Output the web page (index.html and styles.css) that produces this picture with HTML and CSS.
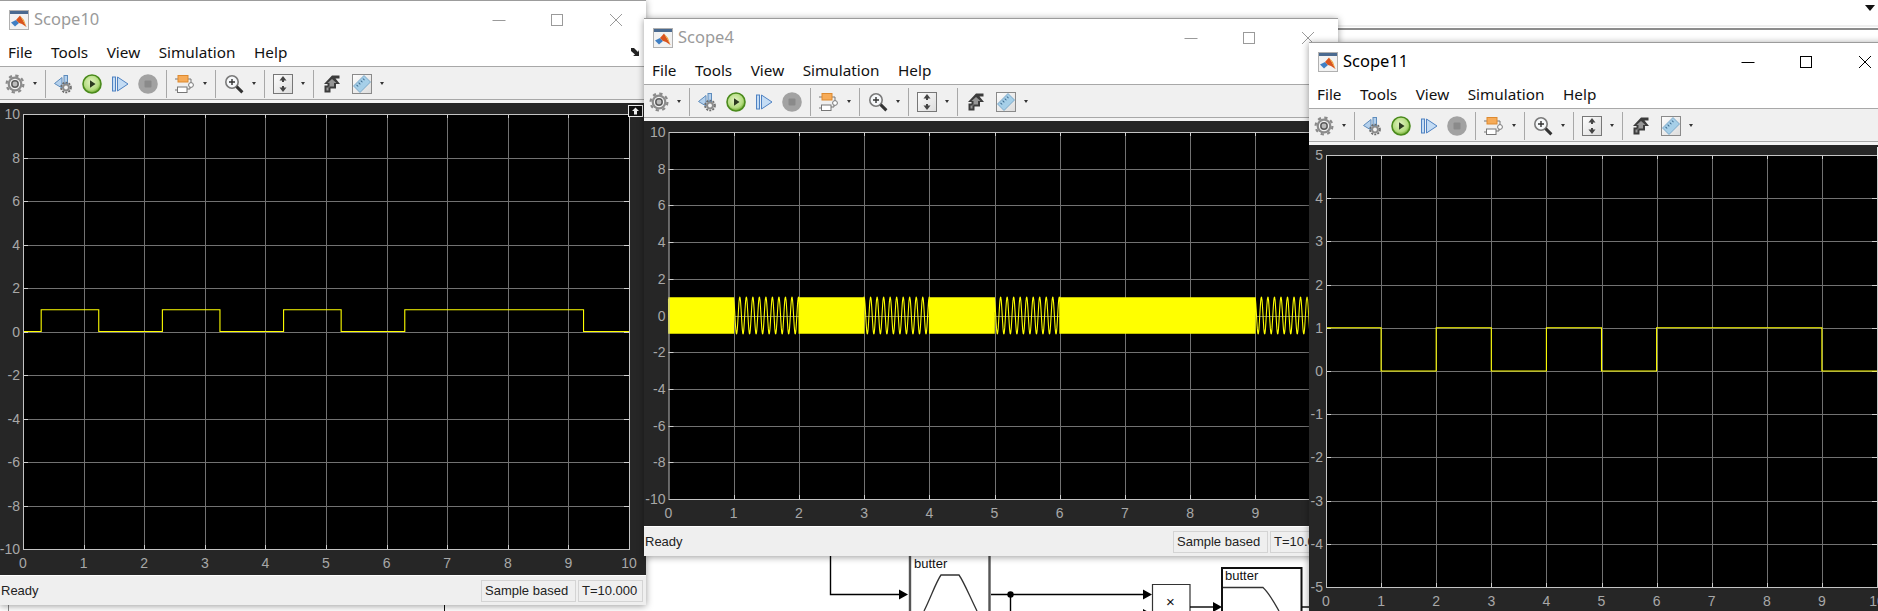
FILE: index.html
```html
<!DOCTYPE html>
<html lang="en">
<head>
    <meta charset="UTF-8">
    <title>Scopes</title>
    <link rel="stylesheet" href="styles.css">
</head>
<body>
    <!-- icons used by all three toolbars -->
    <svg class="sprite" xmlns="http://www.w3.org/2000/svg">
        <defs>
            <radialGradient id="playFill" cx="45%" cy="40%" r="60%">
                <stop offset="0%" stop-color="#e4f4c4"/>
                <stop offset="70%" stop-color="#b4dc80"/>
                <stop offset="100%" stop-color="#6ca82c"/>
            </radialGradient>
            <linearGradient id="boxFill" x1="0" y1="0" x2="1" y2="1">
                <stop offset="0%" stop-color="#fdfdfd"/>
                <stop offset="100%" stop-color="#dcdcdc"/>
            </linearGradient>
        </defs>
        <symbol id="i-logo" viewBox="0 0 20 20">
            <rect x="0.5" y="0.5" width="19" height="19" fill="#f2f2f2" stroke="#b0b0b0"/>
            <rect x="1" y="1" width="18" height="3" fill="#4a6a90"/>
            <polygon points="2,12.5 7,10 10,13 6,16.5" fill="#3f7fc4"/>
            <polygon points="7,10 11,5.5 14,10.5 17.5,17 13,14 10,13" fill="#d9541e"/>
            <polygon points="11,5.5 14,10.5 17.5,17 15,10" fill="#f0a030"/>
        </symbol>
        <symbol id="i-min" viewBox="0 0 14 14"><line x1="0.5" y1="7.5" x2="13.5" y2="7.5" stroke="currentColor"/></symbol>
        <symbol id="i-max" viewBox="0 0 14 14"><rect x="1.5" y="1.5" width="11" height="11" fill="none" stroke="currentColor"/></symbol>
        <symbol id="i-close" viewBox="0 0 14 14"><path d="M1 1L13 13M13 1L1 13" fill="none" stroke="currentColor"/></symbol>
        <symbol id="i-gear" viewBox="0 0 20 20">
            <circle cx="10" cy="10" r="8.4" fill="none" stroke="#8a8a8a" stroke-width="2.2" stroke-dasharray="3.3 3.3"/>
            <circle cx="10" cy="10" r="7.4" fill="#8c8c8c"/>
            <circle cx="10" cy="10" r="5.2" fill="#f2f2f2"/>
            <circle cx="10" cy="10" r="3.2" fill="#bcbcbc" stroke="#5c5c5c" stroke-width="1.5"/>
        </symbol>
        <symbol id="i-back" viewBox="0 0 20 20">
            <polygon points="0.5,9.5 8,3.5 8,14" fill="#b4d0ec" stroke="#5e8cbc"/>
            <rect x="10" y="1.5" width="3.5" height="8" fill="#b4d0ec" stroke="#5e8cbc"/>
            <circle cx="12" cy="13.5" r="5" fill="none" stroke="#6a6a6a" stroke-width="1.6" stroke-dasharray="2 1.2"/>
            <circle cx="12" cy="13.5" r="4" fill="#8c8c8c"/>
            <circle cx="12" cy="13.5" r="1.9" fill="#f4f4f4"/>
        </symbol>
        <symbol id="i-play" viewBox="0 0 20 20">
            <circle cx="10" cy="10" r="9" fill="url(#playFill)" stroke="#4a8a1c" stroke-width="1.6"/>
            <polygon points="8,6.2 13.5,10 8,13.8" fill="#2c3a20"/>
        </symbol>
        <symbol id="i-step" viewBox="0 0 20 20">
            <rect x="2.5" y="3" width="3" height="14" fill="#c4dcf4" stroke="#4f82c2"/>
            <polygon points="7.5,3 7.5,17 18,10" fill="#c4dcf4" stroke="#4f82c2"/>
        </symbol>
        <symbol id="i-stop" viewBox="0 0 20 20">
            <circle cx="10" cy="10" r="9.8" fill="#a2a2a2"/>
            <rect x="6.5" y="6.5" width="7" height="7" rx="1" fill="#8a8a8a"/>
        </symbol>
        <symbol id="i-blocks" viewBox="0 0 20 20">
            <path d="M0 5H3M13 5H16V9M15 13V15H12M2 16H0" fill="none" stroke="#777"/>
            <rect x="3" y="1.5" width="10" height="6.5" fill="#f6ab58" stroke="#dd8a30"/>
            <circle cx="16" cy="11" r="2.4" fill="#fff" stroke="#777"/>
            <rect x="2.5" y="13" width="9.5" height="5.5" fill="#fff" stroke="#777"/>
        </symbol>
        <symbol id="i-zoom" viewBox="0 0 20 20">
            <circle cx="8" cy="8" r="6.2" fill="#f6f8fa" stroke="#7a7a7a" stroke-width="1.6"/>
            <path d="M5 8H11M8 5V11" stroke="#333" stroke-width="1.4"/>
            <line x1="12.6" y1="12.6" x2="18.4" y2="18.4" stroke="#333" stroke-width="3"/>
        </symbol>
        <symbol id="i-auto" viewBox="0 0 20 20">
            <rect x="0.5" y="0.5" width="19" height="19" fill="url(#boxFill)" stroke="#777"/>
            <polygon points="10,2 6.5,6.5 13.5,6.5" fill="#444"/>
            <rect x="9" y="6" width="2" height="2" fill="#444"/>
            <polygon points="10,18 6.5,13.5 13.5,13.5" fill="#444"/>
            <rect x="9" y="12" width="2" height="2" fill="#444"/>
        </symbol>
        <symbol id="i-signal" viewBox="0 0 20 20">
            <path d="M10 1.5H17.5V4.5H13.5L18 10H14V14.5H8.5V18.5H2.5V11.5H5.5V10H2Z" fill="#3c3c3c"/>
            <path d="M10 5L14.5 9H12V12.5H6.5V16.5H4.5V13.5H7.5V9H5.5Z" fill="#969696"/>
        </symbol>
        <symbol id="i-ruler" viewBox="0 0 20 20">
            <rect x="0.5" y="0.5" width="19" height="19" fill="url(#boxFill)" stroke="#8a8a8a"/>
            <polygon points="1.5,12 12,1.5 18.5,8 8,18.5" fill="#a6cfe8" stroke="#6a9cc0" stroke-width="0.8"/>
            <line x1="5" y1="12" x2="12" y2="5" stroke="#3c6c90" stroke-width="2.4" stroke-dasharray="1 2"/>
        </symbol>
    </svg>

    <!-- the Simulink model behind the scopes -->
    <svg class="backdrop" width="1878" height="611" xmlns="http://www.w3.org/2000/svg">
        <rect x="1338" y="25" width="540" height="2" fill="#efefef"/>
        <rect x="1338" y="28" width="540" height="2" fill="#8c8c8c"/>
        <polygon points="1865,5 1875,5 1870,11" fill="#111"/>
        <line x1="8.5" y1="605" x2="8.5" y2="611" stroke="#888"/>
        <line x1="444.5" y1="605" x2="444.5" y2="611" stroke="#111"/>

        <path d="M830.5 556V594.5H900" fill="none" stroke="#000" stroke-width="1.4"/>
        <polygon points="899,589.5 908,594.5 899,599.5" fill="#000"/>
        <path d="M910 550V611M989.5 550V611" fill="none" stroke="#555" stroke-width="2.4"/>
        <text class="blocktext" x="914" y="568">butter</text>
        <path d="M924 611C931 597 936 582 941 575H959C964 582 970 597 977 611" fill="none" stroke="#333" stroke-width="1.3"/>

        <path d="M991 594.5H1144" fill="none" stroke="#000" stroke-width="1.4"/>
        <circle cx="1010.5" cy="594.5" r="3.2" fill="#000"/>
        <line x1="1010.5" y1="594" x2="1010.5" y2="611" stroke="#000" stroke-width="1.4"/>
        <polygon points="1143,589.5 1152,594.5 1143,599.5" fill="#000"/>
        <polygon points="1143,609 1152,614 1143,619" fill="#000"/>
        <path d="M1152.5 611V584.5H1190V611" fill="#fff" stroke="#333" stroke-width="1.2"/>
        <text class="blocktext blocktext-big" x="1166" y="607">×</text>

        <path d="M1190 607H1214" fill="none" stroke="#000" stroke-width="1.4"/>
        <polygon points="1213,602 1222,607 1213,612" fill="#000"/>
        <path d="M1222 611V568H1301.5V611" fill="#fff" stroke="#111" stroke-width="2"/>
        <text class="blocktext" x="1225" y="580">butter</text>
        <path d="M1223 587.5H1263C1268 592 1274 602 1279 611" fill="none" stroke="#333" stroke-width="1.3"/>
        <line x1="1302" y1="607" x2="1309" y2="607" stroke="#000" stroke-width="1.4"/>
    </svg>

    <section class="win win-1">
        <header class="titlebar">
            <svg class="logo"><use href="#i-logo"/></svg>
            <span class="title">Scope10</span>
            <div class="controls">
                <span class="ctl"><svg><use href="#i-min"/></svg></span>
                <span class="ctl"><svg><use href="#i-max"/></svg></span>
                <span class="ctl"><svg><use href="#i-close"/></svg></span>
            </div>
        </header>
        <nav class="menu">
            <span>File</span><span>Tools</span><span>View</span><span>Simulation</span><span>Help</span>
            <svg class="dock-arrow" viewBox="0 0 10 10"><path d="M1 1L4 1L8 5L9 3L9 9L3 9L5 7.5L1 4Z" fill="#222"/></svg>
        </nav>
        <div class="toolbar">
            <svg class="ico"><use href="#i-gear"/></svg><i class="caret"></i><i class="sep"></i>
            <svg class="ico ico-back"><use href="#i-back"/></svg>
            <svg class="ico"><use href="#i-play"/></svg>
            <svg class="ico"><use href="#i-step"/></svg>
            <svg class="ico"><use href="#i-stop"/></svg><i class="sep"></i>
            <svg class="ico"><use href="#i-blocks"/></svg><i class="caret"></i><i class="sep"></i>
            <svg class="ico"><use href="#i-zoom"/></svg><i class="caret"></i><i class="sep"></i>
            <svg class="ico"><use href="#i-auto"/></svg><i class="caret"></i><i class="sep"></i>
            <svg class="ico"><use href="#i-signal"/></svg>
            <svg class="ico ico-ruler"><use href="#i-ruler"/></svg><i class="caret"></i>
        </div>
        <div class="panel">
            <svg class="plot" id="scope10"></svg>
            <span class="undock"><svg viewBox="0 0 15 12"><rect x="0.5" y="0.5" width="14" height="11" fill="#111" stroke="#eee"/><path d="M7.5 2.5L11 6H9V9.5H6V6H4Z" fill="#eee"/></svg></span>
        </div>
        <footer class="status">
            <span class="ready">Ready</span>
            <span class="field field-mode">Sample based</span>
            <span class="field field-time">T=10.000</span>
        </footer>
    </section>

    <section class="win win-2">
        <header class="titlebar">
            <svg class="logo"><use href="#i-logo"/></svg>
            <span class="title">Scope4</span>
            <div class="controls">
                <span class="ctl"><svg><use href="#i-min"/></svg></span>
                <span class="ctl"><svg><use href="#i-max"/></svg></span>
                <span class="ctl"><svg><use href="#i-close"/></svg></span>
            </div>
        </header>
        <nav class="menu">
            <span>File</span><span>Tools</span><span>View</span><span>Simulation</span><span>Help</span>
        </nav>
        <div class="toolbar">
            <svg class="ico"><use href="#i-gear"/></svg><i class="caret"></i><i class="sep"></i>
            <svg class="ico ico-back"><use href="#i-back"/></svg>
            <svg class="ico"><use href="#i-play"/></svg>
            <svg class="ico"><use href="#i-step"/></svg>
            <svg class="ico"><use href="#i-stop"/></svg><i class="sep"></i>
            <svg class="ico"><use href="#i-blocks"/></svg><i class="caret"></i><i class="sep"></i>
            <svg class="ico"><use href="#i-zoom"/></svg><i class="caret"></i><i class="sep"></i>
            <svg class="ico"><use href="#i-auto"/></svg><i class="caret"></i><i class="sep"></i>
            <svg class="ico"><use href="#i-signal"/></svg>
            <svg class="ico ico-ruler"><use href="#i-ruler"/></svg><i class="caret"></i>
        </div>
        <div class="panel">
            <svg class="plot" id="scope4"></svg>
        </div>
        <footer class="status">
            <span class="ready">Ready</span>
            <span class="field field-mode">Sample based</span>
            <span class="field field-time">T=10.000</span>
        </footer>
    </section>

    <section class="win win-3">
        <header class="titlebar">
            <svg class="logo"><use href="#i-logo"/></svg>
            <span class="title">Scope11</span>
            <div class="controls">
                <span class="ctl"><svg><use href="#i-min"/></svg></span>
                <span class="ctl"><svg><use href="#i-max"/></svg></span>
                <span class="ctl"><svg><use href="#i-close"/></svg></span>
            </div>
        </header>
        <nav class="menu">
            <span>File</span><span>Tools</span><span>View</span><span>Simulation</span><span>Help</span>
        </nav>
        <div class="toolbar">
            <svg class="ico"><use href="#i-gear"/></svg><i class="caret"></i><i class="sep"></i>
            <svg class="ico ico-back"><use href="#i-back"/></svg>
            <svg class="ico"><use href="#i-play"/></svg>
            <svg class="ico"><use href="#i-step"/></svg>
            <svg class="ico"><use href="#i-stop"/></svg><i class="sep"></i>
            <svg class="ico"><use href="#i-blocks"/></svg><i class="caret"></i><i class="sep"></i>
            <svg class="ico"><use href="#i-zoom"/></svg><i class="caret"></i><i class="sep"></i>
            <svg class="ico"><use href="#i-auto"/></svg><i class="caret"></i><i class="sep"></i>
            <svg class="ico"><use href="#i-signal"/></svg>
            <svg class="ico ico-ruler"><use href="#i-ruler"/></svg><i class="caret"></i>
        </div>
        <div class="panel">
            <svg class="plot" id="scope11"></svg>
            <span class="undock"><svg viewBox="0 0 15 12"><rect x="0.5" y="0.5" width="14" height="11" fill="#111" stroke="#eee"/><path d="M7.5 2.5L11 6H9V9.5H6V6H4Z" fill="#eee"/></svg></span>
        </div>
    </section>

    <script src="scope.js"></script>
</body>
</html>
```

FILE: styles.css
```css
html, body {
    margin: 0;
    padding: 0;
    overflow: hidden;
}
body {
    position: relative;
    width: 1878px;
    height: 611px;
    background-color: #fff;
    font-family: "Liberation Sans", Arial, sans-serif;
}
.sprite {
    display: block;
    width: 0;
    height: 0;
}
.backdrop {
    position: absolute;
    left: 0;
    top: 0;
}
.blocktext {
    font-family: "Liberation Sans", Arial, sans-serif;
    font-size: 13px;
    fill: #111;
}
.blocktext-big {
    font-size: 15px;
}

/* windows sit on the desktop where they were dragged to */
.win {
    position: absolute;
    display: flex;
    flex-direction: column;
    background-color: #fff;
    border-top: 1px solid #9c9c9c;
    box-shadow: 0 1px 7px rgba(0, 0, 0, 0.4);
    box-sizing: border-box;
    color: #9a9a9a;
}
.win-1 {
    left: 0;
    top: 0;
    width: 646px;
    height: 605px;
}
.win-2 {
    left: 644px;
    top: 18px;
    width: 694px;
    height: 538px;
}
.win-3 {
    left: 1309px;
    top: 42px;
    width: 586px;
    height: 569px;
    color: #000;
}

.titlebar {
    display: flex;
    align-items: center;
    height: 39px;
    padding: 0 0 2px 9px;
    box-sizing: border-box;
    background-color: #fff;
}
.logo {
    width: 20px;
    height: 20px;
    flex: none;
}
.title {
    margin-left: 5px;
    padding-bottom: 3px;
    font-family: "Noto Sans", sans-serif;
    font-size: 16.5px;
}
.controls {
    display: flex;
    margin-left: auto;
    padding-right: 1px;
}
.ctl {
    display: flex;
    justify-content: center;
    align-items: center;
    width: 58.5px;
    height: 37px;
}
.ctl svg {
    width: 14px;
    height: 14px;
}

.menu {
    display: flex;
    align-items: center;
    gap: 18.5px;
    height: 27px;
    padding: 0 0 3px 8px;
    box-sizing: border-box;
    border-bottom: 1px solid #a8a8a8;
    background-color: #fff;
    color: #111;
    font-family: "Noto Sans", sans-serif;
    font-size: 15.3px;
}
.dock-arrow {
    width: 10px;
    height: 10px;
    margin-left: auto;
    margin-right: 6px;
}

.toolbar {
    display: flex;
    align-items: center;
    gap: 8px;
    height: 36px;
    padding: 0 0 3px 5px;
    box-sizing: border-box;
    background: linear-gradient(#f0f0f0 32px, #a8a8a8 32px, #a8a8a8 33px, #f4f4f4 33px);
}
.ico {
    width: 20px;
    height: 20px;
    flex: none;
}
.ico-ruler {
    margin-left: 2px;
}
.caret {
    width: 0;
    height: 0;
    border-left: 2.5px solid transparent;
    border-right: 2.5px solid transparent;
    border-top: 3px solid #333;
}
.sep {
    width: 1px;
    height: 28px;
    background-color: #a8a8a8;
}

.panel {
    position: relative;
    flex: 1;
    min-height: 0;
    background-color: #262626;
}
.plot {
    display: block;
    font-family: "Liberation Sans", Arial, sans-serif;
    font-size: 14px;
}
.plot .tick-label {
    fill: #a8a8a8;
}
.plot .grid {
    stroke: #727272;
    stroke-width: 1;
}
.plot .frame {
    fill: none;
    stroke: #c4c4c4;
    stroke-width: 1;
}
.plot .tick {
    stroke: #d0d0d0;
    stroke-width: 1;
}
.plot .signal {
    fill: none;
    stroke: #ffff00;
    stroke-width: 1.1;
}
.undock {
    position: absolute;
    right: 3px;
    top: 2px;
    width: 15px;
    height: 12px;
}
.undock svg {
    display: block;
}

.status {
    display: flex;
    align-items: center;
    gap: 2px;
    height: 30px;
    padding: 0 3px 0 1px;
    box-sizing: border-box;
    border-top: 1px solid #fff;
    background-color: #efefef;
    color: #222;
    font-size: 13px;
}
.ready {
    margin-right: auto;
}
.field {
    display: flex;
    align-items: center;
    height: 22px;
    padding-left: 3px;
    box-sizing: border-box;
    border: 1px solid #d4d4d4;
}
.field-mode {
    width: 95px;
}
.field-time {
    width: 65px;
}
```

FILE: scope.js
```js
// Draws the black scope axes and their traces
const NS = 'http://www.w3.org/2000/svg';

function add(parent, name, attrs, text) {
    const el = document.createElementNS(NS, name);
    for (const key in attrs) {
        el.setAttribute(key, attrs[key]);
    }
    if (text !== undefined) {
        el.textContent = text;
    }
    parent.appendChild(el);
    return el;
}

function drawScope(id, opts) {
    const svg = document.getElementById(id);
    const { width, height, left, top, plotW, plotH, yMax, yStep } = opts;
    svg.setAttribute('width', width);
    svg.setAttribute('height', height);

    const px = t => left + plotW * t / 10;
    const py = v => top + plotH * (yMax - v) / (2 * yMax);

    add(svg, 'rect', { x: left, y: top, width: plotW, height: plotH, fill: '#000' });

    for (let t = 0; t <= 10; t++) {
        const x = Math.round(px(t)) + 0.5;
        if (t > 0 && t < 10) {
            add(svg, 'line', { class: 'grid', x1: x, y1: top, x2: x, y2: top + plotH });
            add(svg, 'line', { class: 'tick', x1: x, y1: top + plotH - 4, x2: x, y2: top + plotH });
            add(svg, 'line', { class: 'tick', x1: x, y1: top, x2: x, y2: top + 4 });
        }
        add(svg, 'text', { class: 'tick-label', x: px(t), y: top + plotH + 19, 'text-anchor': 'middle' }, t);
    }
    for (let v = yMax; v >= -yMax; v -= yStep) {
        const y = Math.round(py(v)) + 0.5;
        if (v !== yMax && v !== -yMax) {
            add(svg, 'line', { class: 'grid', x1: left, y1: y, x2: left + plotW, y2: y });
            add(svg, 'line', { class: 'tick', x1: left, y1: y, x2: left + 5, y2: y });
            add(svg, 'line', { class: 'tick', x1: left + plotW - 5, y1: y, x2: left + plotW, y2: y });
        }
        add(svg, 'text', { class: 'tick-label', x: left - 3, y: py(v) + 5, 'text-anchor': 'end' }, v);
    }

    add(svg, 'path', { class: 'signal', d: opts.trace(px, py) });
    add(svg, 'rect', { class: 'frame', x: left + 0.5, y: top + 0.5, width: plotW, height: plotH });
}

// square wave: edges is a list of [time, level]
function stepTrace(edges) {
    return (px, py) => {
        let d = 'M' + px(0) + ' ' + py(edges[0][1]);
        edges.slice(1).forEach(([t, level]) => {
            d += 'H' + px(t) + 'V' + py(level);
        });
        return d + 'H' + px(10);
    };
}

// FSK carrier: fast while the bit is high, slow while it is low
function fskTrace(px, py) {
    const slow = [[1, 2], [3, 4], [5, 6], [9, 10]];
    let d = '';
    let phase = 0;
    const dt = 0.0005;
    for (let t = 0; t <= 10; t += dt) {
        const isSlow = slow.some(([a, b]) => t >= a && t < b);
        phase += 2 * Math.PI * (isSlow ? 10 : 130) * dt;
        d += (t === 0 ? 'M' : 'L') + px(t).toFixed(2) + ' ' + py(Math.cos(phase)).toFixed(2);
    }
    return d;
}

drawScope('scope10', {
    width: 646, height: 472, left: 23, top: 11, plotW: 606, plotH: 435,
    yMax: 10, yStep: 2,
    trace: stepTrace([[0, 0], [0.3, 1], [1.25, 0], [2.3, 1], [3.25, 0], [4.3, 1], [5.25, 0], [6.3, 1], [9.25, 0]])
});

drawScope('scope4', {
    width: 694, height: 405, left: 24.5, top: 11, plotW: 652, plotH: 367,
    yMax: 10, yStep: 2,
    trace: fskTrace
});

drawScope('scope11', {
    width: 586, height: 466, left: 17, top: 10, plotW: 551, plotH: 432,
    yMax: 5, yStep: 1,
    trace: stepTrace([[0, 1], [1, 0], [2, 1], [3, 0], [4, 1], [5, 0], [6, 1], [9, 0]])
});
```
